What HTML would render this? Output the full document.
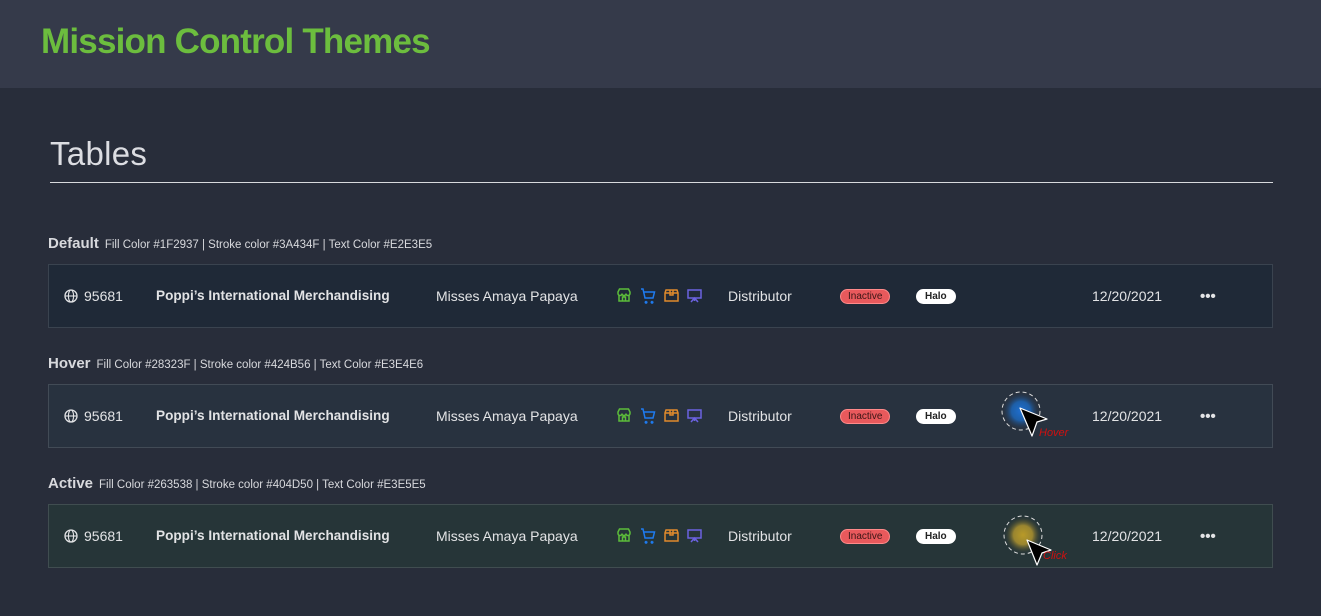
<!DOCTYPE html>
<html><head><meta charset="utf-8"><style>
*{margin:0;padding:0;box-sizing:border-box}
body{width:1321px;height:616px;background:#282d3a;font-family:"Liberation Sans",sans-serif;position:relative;overflow:hidden;color:#e2e3e5}
.hdr{position:absolute;left:0;top:0;width:1321px;height:88px;background:#353a4a}
.hdr h1{position:absolute;left:41px;top:22px;font-size:35px;font-weight:bold;color:#6cbd3e;letter-spacing:-0.8px}
.t{position:absolute;left:50px;top:135px;font-size:33px;color:#dcdde2;letter-spacing:0.3px}
.line{position:absolute;left:50px;top:182px;width:1223px;height:1px;background:#d8d9dd}
.lbl{position:absolute;left:48px;font-size:15px;color:#d8d9dd;font-weight:bold}
.lbl span{font-size:11.5px;margin-left:6px;font-weight:normal}
.row{position:absolute;left:48px;width:1225px;height:64px;border:1px solid #3a434f;background:#1f2937;font-size:14px}
.row>*{position:absolute;top:23px}
.g{left:15px;top:24px}
.id{left:35px}
.co{left:107px;font-weight:bold;font-size:13.6px}
.nm{left:387px}
.ic{left:567px;top:22px}
.ds{left:679px}
.in{left:791px;top:24px;background:#e8595c;color:#3a1515;border:1px solid #ff8a8a;border-radius:8px;font-size:10px;padding:1px 7px;height:15px;line-height:12px}
.ha{left:867px;top:24px;background:#fff;color:#222;border-radius:8px;font-size:10px;font-weight:bold;padding:1px 9px;height:15px;line-height:13px}
.dt{left:1043px}
.dots{left:1151px;top:23px;font-weight:bold;font-size:15px}
</style></head><body>
<div class="hdr"><h1>Mission Control Themes</h1></div>
<div class="t">Tables</div>
<div class="line"></div>

<div class="lbl" style="top:235px">Default<span>Fill Color #1F2937 | Stroke color #3A434F | Text Color #E2E3E5</span></div>
<div class="lbl" style="top:355px">Hover<span>Fill Color #28323F | Stroke color #424B56 | Text Color #E3E4E6</span></div>
<div class="lbl" style="top:475px">Active<span>Fill Color #263538 | Stroke color #404D50 | Text Color #E3E5E5</span></div>

<svg width="0" height="0" style="position:absolute">
<defs>
<g id="globe"><circle cx="7" cy="7" r="6" fill="none" stroke="#e2e3e5" stroke-width="1.3"/><ellipse cx="7" cy="7" rx="2.6" ry="6" fill="none" stroke="#e2e3e5" stroke-width="1.1"/><path d="M1 7h12" stroke="#e2e3e5" stroke-width="1.1"/></g>
<g id="icons" fill="none" stroke-width="1.5">
<path d="M2 5l1.5-3h9l1.5 3v1.5a2 2 0 0 1-4 0a2 2 0 0 1-4 0a2 2 0 0 1-4 0zM3 8v6h10V8M6.5 14v-4h3v4" stroke="#5cbd3a"/>
<path d="M25 2h2l2 9h8l1.5-6H28M30 14.5a.8.8 0 1 0 .1 0M36 14.5a.8.8 0 1 0 .1 0" stroke="#1e7bf0"/>
<path d="M50 3h11l1 3v8H49V6zM49 6h13M54 3v5h3V3" stroke="#e08a2c"/>
<path d="M72 3h13v8H72zM78.5 11v3M75 15l3.5-4 3.5 4" stroke="#6b62e0"/>
</g>
<radialGradient id="bl"><stop offset="0" stop-color="#1f6fd0"/><stop offset="0.5" stop-color="#1e5fa8"/><stop offset="1" stop-color="#283040" stop-opacity="0"/></radialGradient>
<radialGradient id="yl"><stop offset="0" stop-color="#b89a28"/><stop offset="0.5" stop-color="#9a8530"/><stop offset="1" stop-color="#263538" stop-opacity="0"/></radialGradient>
</defs></svg>

<div class="row" style="top:264px">
<svg class="g" width="14" height="14"><use href="#globe"/></svg><div class="id">95681</div><div class="co">Poppi’s International Merchandising</div><div class="nm">Misses Amaya Papaya</div>
<svg class="ic" width="90" height="18"><use href="#icons"/></svg><div class="ds">Distributor</div><div class="in">Inactive</div><div class="ha">Halo</div><div class="dt">12/20/2021</div><div class="dots">•••</div>
</div>

<div class="row" style="top:384px;background:#28323f;border-color:#424b56">
<svg class="g" width="14" height="14"><use href="#globe"/></svg><div class="id">95681</div><div class="co">Poppi’s International Merchandising</div><div class="nm">Misses Amaya Papaya</div>
<svg class="ic" width="90" height="18"><use href="#icons"/></svg><div class="ds">Distributor</div><div class="in">Inactive</div><div class="ha">Halo</div><div class="dt">12/20/2021</div><div class="dots">•••</div>
<svg style="left:950px;top:0px" width="80" height="56"><circle cx="22" cy="26" r="19" fill="url(#bl)"/><circle cx="22" cy="26" r="19" fill="none" stroke="#ddd" stroke-dasharray="4 3"/><path d="M21 23L48 34L38 37L33 51Z" fill="#000" stroke="#fff" stroke-width="1.2" stroke-linejoin="round"/><text x="40" y="51" fill="#d01010" font-size="11" font-style="italic" font-family="Liberation Sans">Hover</text></svg>
</div>

<div class="row" style="top:504px;background:#263538;border-color:#404d50">
<svg class="g" width="14" height="14"><use href="#globe"/></svg><div class="id">95681</div><div class="co">Poppi’s International Merchandising</div><div class="nm">Misses Amaya Papaya</div>
<svg class="ic" width="90" height="18"><use href="#icons"/></svg><div class="ds">Distributor</div><div class="in">Inactive</div><div class="ha">Halo</div><div class="dt">12/20/2021</div><div class="dots">•••</div>
<svg style="left:954px;top:0px" width="80" height="62"><circle cx="20" cy="30" r="19" fill="url(#yl)"/><circle cx="20" cy="30" r="19" fill="none" stroke="#ddd" stroke-dasharray="4 3"/><path d="M24 35L48 45L39 48L34 60Z" fill="#000" stroke="#fff" stroke-width="1.2" stroke-linejoin="round"/><text x="40" y="54" fill="#d01010" font-size="11" font-style="italic" font-family="Liberation Sans">Click</text></svg>
</div>
</body></html>
